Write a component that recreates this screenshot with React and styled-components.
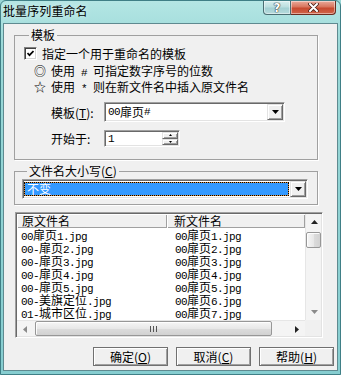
import React from "react";
import styled, { createGlobalStyle } from "styled-components";

const font = `"Noto Sans CJK SC", "Noto Sans", sans-serif`;

const GlobalStyle = createGlobalStyle`
  html, body {
    margin: 0;
    padding: 0;
  }
  body {
    background: #9ad6d6;
    font-family: ${font};
    font-size: 12px;
    color: #000;
  }
  * {
    box-sizing: border-box;
  }
`;

const Window = styled.div`
  width: 341px;
  height: 375px;
  display: flex;
  flex-direction: column;
  border: 1px solid #3f7f86;
  border-radius: 6px 6px 0 0;
  background: linear-gradient(180deg, #b4e6e4 0%, #9bd9d8 12%, #8fd2d3 60%, #86cdd0 100%);
`;

const TitleBar = styled.div`
  height: 22px;
  display: flex;
  align-items: flex-start;
  padding-left: 2px;
`;

const Title = styled.div`
  margin-top: 2px;
  line-height: 16px;
  font-size: 12px;
  letter-spacing: 0.1px;
  text-shadow: 0 0 6px rgba(255, 255, 255, 0.8);
`;

const Caption = styled.div`
  margin-left: auto;
  margin-right: 4px;
  display: flex;
`;

const CaptionButton = styled.div`
  height: 14px;
  width: ${(p) => p.$w}px;
  display: flex;
  align-items: center;
  justify-content: center;
  border: 1px solid ${(p) => (p.$close ? "#6b2c20" : "#4b6d72")};
  border-top: none;
  border-left: ${(p) => (p.$close ? "none" : "1px solid #4b6d72")};
  border-radius: ${(p) => (p.$close ? "0 0 4px 0" : "0 0 0 4px")};
  background: ${(p) =>
    p.$close
      ? "linear-gradient(180deg, #e9ab9c 0%, #d8755e 45%, #c74a30 55%, #d0654a 100%)"
      : "linear-gradient(180deg, #d8eeee 0%, #bcdfe0 45%, #a3d0d3 55%, #b6dadc 100%)"};
  box-shadow: inset 0 0 0 1px rgba(255, 255, 255, 0.45);
  color: #fff;
  font-family: "DejaVu Sans", sans-serif;
  font-weight: bold;
  font-size: 12px;
  line-height: 12px;
  text-shadow: 0 0 1px #333, 0 0 1px #333, 0 0 1px #333;
`;

const Client = styled.div`
  flex: 1;
  margin: 0 2px 3px;
  background: #f0f0f0;
  border: 1px solid #5f8a90;
  padding: 4px 0 0 10px;
  display: flex;
  flex-direction: column;
  align-items: flex-start;
`;

const Group = styled.fieldset`
  margin: ${(p) => p.$top || 0}px 0 0 0;
  width: 304px;
  min-width: 0;
  padding: ${(p) => p.$pad};
  border: 1px solid #a0a0a0;
  box-shadow: 1px 1px 0 #fff;
`;

const Legend = styled.legend`
  margin-left: 5px;
  padding: 0 2px;
  line-height: 14px;
`;

const CheckRow = styled.div`
  display: flex;
  align-items: center;
  gap: 5px;
  height: 13px;
  line-height: 13px;
`;

const CheckBox = styled.span`
  width: 13px;
  height: 13px;
  display: flex;
  align-items: center;
  justify-content: center;
  background: #fff;
  border: 1px solid;
  border-color: #808080 #fff #fff #808080;
  box-shadow: inset 1px 1px #404040, inset -1px -1px #d4d4d4;
`;

const Hints = styled.div`
  margin: 4px 0 0 10px;
  display: grid;
  grid-template-columns: 17px auto;
  line-height: 13px;
  white-space: pre;
`;

const HintMark = styled.span`
  font-size: 12px;
`;

/* SimSun-like metrics: CJK 12px wide, Latin half-width 6px */
const Han = styled.span`
  font-family: ${font};
  font-size: 12px;
`;

const Latin = styled.span`
  font-family: "Liberation Mono", monospace;
  font-size: 11px;
  letter-spacing: -0.6px;
`;

const Mixed = ({ text }) =>
  text
    .split(/([\u3000-\u9fff\uff00-\uffef]+)/)
    .filter(Boolean)
    .map((part, i) =>
      /[\u3000-\u9fff\uff00-\uffef]/.test(part) ? (
        <Han key={i}>{part}</Han>
      ) : (
        <Latin key={i}>{part}</Latin>
      )
    );

const FieldRow = styled.div`
  display: flex;
  align-items: center;
  margin-top: ${(p) => p.$top}px;
  padding-left: 27px;
`;

const FieldLabel = styled.span`
  width: 53px;
`;

const Sunken = styled.div`
  width: ${(p) => p.$w}px;
  height: ${(p) => p.$h}px;
  display: flex;
  align-items: stretch;
  background: #fff;
  border: 1px solid;
  border-color: #a0a0a0 #fff #fff #a0a0a0;
  box-shadow: inset 1px 1px #696969, inset -1px -1px #e3e3e3;
  padding: 1px;
`;

const FieldText = styled.span`
  flex: 1;
  display: flex;
  align-items: center;
  padding-left: 2px;
  line-height: 12px;
  overflow: hidden;
  white-space: nowrap;
`;

const DropButton = styled.span`
  width: 16px;
  display: flex;
  align-items: center;
  justify-content: center;
  background: #f0f0f0;
  border: 1px solid;
  border-color: #e3e3e3 #696969 #696969 #e3e3e3;
  box-shadow: inset 1px 1px #fff, inset -1px -1px #a0a0a0;
`;

const SpinButtons = styled.span`
  width: 16px;
  display: flex;
  flex-direction: column;
`;

const SpinHalf = styled(DropButton)`
  width: 16px;
  flex: 1;
`;

const Selection = styled.span`
  flex: 1;
  margin: 1px 1px 1px 0;
  padding-left: 2px;
  line-height: 12px;
  color: #fff;
  border: 1px dotted #000;
  background: linear-gradient(#3399ff, #3399ff) padding-box, #d89040 border-box;
`;

const ListView = styled.div`
  margin: 7px 0 0 1px;
  width: 308px;
  height: 126px;
  border: 1px solid;
  border-color: #a0a0a0 #fff #fff #a0a0a0;
  box-shadow: inset 1px 1px #696969, inset -1px -1px #e3e3e3;
  padding: 1px;
  display: grid;
  grid-template-columns: 1fr 16px;
  grid-template-rows: 1fr 16px;
  background: #fff;
`;

const ListBody = styled.div`
  overflow: hidden;
`;

const Header = styled.div`
  display: grid;
  grid-template-columns: 150px 1fr;
  height: 14px;
  background: #f0f0f0;
`;

const HeaderCell = styled.div`
  padding-left: ${(p) => p.$pad}px;
  line-height: 14px;
  box-shadow: inset 1px 1px #fff, inset -1px -1px #a0a0a0;
  white-space: nowrap;
`;

const Row = styled.div`
  display: grid;
  grid-template-columns: 150px 1fr;
  height: 13px;
  line-height: 13px;
  white-space: nowrap;
  &:first-of-type {
    margin-top: 1px;
  }
`;

const Cell = styled.span`
  padding-left: ${(p) => p.$pad}px;
`;

const VScroll = styled.div`
  display: flex;
  flex-direction: column;
  background: #f4f4f4;
  border-left: 1px solid #e6e6e6;
`;

const HScroll = styled.div`
  display: flex;
  align-items: stretch;
  background: #f4f4f4;
  border-top: 1px solid #e6e6e6;
`;

const ScrollArrow = styled.div`
  width: 16px;
  height: 16px;
  flex: none;
  display: flex;
  align-items: center;
  justify-content: center;
`;

const ScrollGap = styled.div`
  flex: 1;
`;

const Thumb = styled.div`
  flex: none;
  width: ${(p) => (p.$horizontal ? "237px" : "15px")};
  height: ${(p) => (p.$horizontal ? "15px" : "16px")};
  margin: ${(p) => (p.$horizontal ? "0 0 0 2px" : "2px 0 0 0")};
  border: 1px solid #979797;
  border-radius: 2px;
  background: ${(p) =>
    p.$horizontal
      ? "linear-gradient(180deg, #f6f6f6 0%, #e8e8e8 50%, #dcdcdc 51%, #d2d2d2 100%)"
      : "linear-gradient(90deg, #f6f6f6 0%, #e8e8e8 50%, #dcdcdc 51%, #d2d2d2 100%)"};
  box-shadow: inset 1px 1px rgba(255, 255, 255, 0.9);
  display: flex;
  align-items: center;
  justify-content: center;
`;

const Corner = styled.div`
  background: #f0f0f0;
`;

const ButtonRow = styled.div`
  display: flex;
  gap: 8px;
  margin: 9px 0 0 79px;
`;

const Button = styled.div`
  width: 75px;
  height: 19px;
  display: flex;
  align-items: center;
  justify-content: center;
  line-height: 17px;
  background: #f0f0f0;
  border: 1px solid #707070;
  box-shadow: inset 1px 1px #fff, inset -1px -1px #a0a0a0;
`;

const Triangle = ({ dir = "down", color = "#000", size = 7 }) => {
  const h = Math.ceil(size / 2);
  const pts = {
    down: `0,0 ${size},0 ${size / 2},${h}`,
    up: `0,${h} ${size},${h} ${size / 2},0`,
  };
  if (dir === "left" || dir === "right") {
    const p = dir === "left" ? `${h},0 ${h},${size} 0,${size / 2}` : `0,0 0,${size} ${h},${size / 2}`;
    return (
      <svg width={h} height={size} viewBox={`0 0 ${h} ${size}`}>
        <polygon points={p} fill={color} />
      </svg>
    );
  }
  return (
    <svg width={size} height={h} viewBox={`0 0 ${size} ${h}`}>
      <polygon points={pts[dir]} fill={color} />
    </svg>
  );
};

const CheckMark = () => (
  <svg width="7" height="7" viewBox="0 0 7 7">
    <polyline points="0.5,3 2.5,5.2 6.5,1" fill="none" stroke="#000" strokeWidth="1.7" />
  </svg>
);

const CloseGlyph = () => (
  <svg width="11" height="9" viewBox="0 0 11 9">
    <path d="M2 1 L9 8 M9 1 L2 8" stroke="#4a2018" strokeWidth="3.6" strokeLinecap="round" />
    <path d="M2 1 L9 8 M9 1 L2 8" stroke="#fff" strokeWidth="2" strokeLinecap="round" />
  </svg>
);

const Grip = () => (
  <svg width="7" height="6" viewBox="0 0 7 6">
    <path d="M0.5 0 V6 M3.5 0 V6 M6.5 0 V6" stroke="#555" strokeWidth="1" />
  </svg>
);

const files = [
  ["00扉页1.jpg", "00扉页1.jpg"],
  ["00-扉页2.jpg", "00扉页2.jpg"],
  ["00-扉页3.jpg", "00扉页3.jpg"],
  ["00-扉页4.jpg", "00扉页4.jpg"],
  ["00-扉页5.jpg", "00扉页5.jpg"],
  ["00-美旗定位.jpg", "00扉页6.jpg"],
  ["01-城市区位.jpg", "00扉页7.jpg"],
];

export default function App() {
  return (
    <>
      <GlobalStyle />
      <Window>
        <TitleBar>
          <Title>批量序列重命名</Title>
          <Caption>
            <CaptionButton $w={28}>?</CaptionButton>
            <CaptionButton $w={45} $close>
              <CloseGlyph />
            </CaptionButton>
          </Caption>
        </TitleBar>

        <Client>
          <Group $pad="5px 0 12px 9px">
            <Legend>模板</Legend>
            <CheckRow>
              <CheckBox>
                <CheckMark />
              </CheckBox>
              <span>指定一个用于重命名的模板</span>
            </CheckRow>
            <Hints>
              <HintMark>◎</HintMark>
              <span>
                <Mixed text="使用 # 可指定数字序号的位数" />
              </span>
              <HintMark>☆</HintMark>
              <span>
                <Mixed text="使用 * 则在新文件名中插入原文件名" />
              </span>
            </Hints>
            <FieldRow $top={6}>
              <FieldLabel>
                模板(<u>T</u>):
              </FieldLabel>
              <Sunken $w={181} $h={20}>
                <FieldText>
                  <Mixed text="00扉页#" />
                </FieldText>
                <DropButton>
                  <Triangle />
                </DropButton>
              </Sunken>
            </FieldRow>
            <FieldRow $top={8}>
              <FieldLabel>开始于:</FieldLabel>
              <Sunken $w={76} $h={17}>
                <FieldText>
                  <Mixed text="1" />
                </FieldText>
                <SpinButtons>
                  <SpinHalf>
                    <Triangle dir="up" size={3} />
                  </SpinHalf>
                  <SpinHalf>
                    <Triangle dir="down" size={3} />
                  </SpinHalf>
                </SpinButtons>
              </Sunken>
            </FieldRow>
          </Group>

          <Group $top={4} $pad="1px 0 5px 7px">
            <Legend>
              文件名大小写(<u>C</u>)
            </Legend>
            <Sunken $w={286} $h={20}>
              <Selection>不变</Selection>
              <DropButton>
                <Triangle />
              </DropButton>
            </Sunken>
          </Group>

          <ListView>
            <ListBody>
              <Header>
                <HeaderCell $pad={5}>原文件名</HeaderCell>
                <HeaderCell $pad={7}>新文件名</HeaderCell>
              </Header>
              {files.map(([from, to]) => (
                <Row key={from}>
                  <Cell $pad={4}>
                    <Mixed text={from} />
                  </Cell>
                  <Cell $pad={8}>
                    <Mixed text={to} />
                  </Cell>
                </Row>
              ))}
            </ListBody>
            <VScroll>
              <ScrollArrow>
                <Triangle dir="up" color="#222" size={7} />
              </ScrollArrow>
              <Thumb />
              <ScrollGap />
              <ScrollArrow>
                <Triangle dir="down" color="#8a8a8a" size={7} />
              </ScrollArrow>
            </VScroll>
            <HScroll>
              <ScrollArrow>
                <Triangle dir="left" color="#8a8a8a" size={7} />
              </ScrollArrow>
              <Thumb $horizontal>
                <Grip />
              </Thumb>
              <ScrollGap />
              <ScrollArrow>
                <Triangle dir="right" color="#222" size={7} />
              </ScrollArrow>
            </HScroll>
            <Corner />
          </ListView>

          <ButtonRow>
            <Button>
              确定(<u>O</u>)
            </Button>
            <Button>
              取消(<u>C</u>)
            </Button>
            <Button>
              帮助(<u>H</u>)
            </Button>
          </ButtonRow>
        </Client>
      </Window>
    </>
  );
}
